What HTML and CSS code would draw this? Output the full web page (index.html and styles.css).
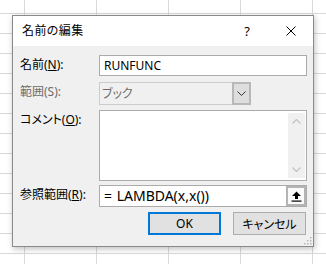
FILE: index.html
```html
<!DOCTYPE html>
<html lang="ja">
<head>
    <meta charset="UTF-8">
    <meta name="viewport" content="width=device-width, initial-scale=1.0">
    <title>名前の編集</title>
    <link rel="stylesheet" href="styles.css">
</head>
<body>
    <div class="dialog">
        <div class="titlebar">
            <span class="title">名前の編集</span>
            <span class="title-btn">?</span>
            <span class="title-btn">
                <svg width="10" height="10" viewBox="0 0 10 10">
                    <path d="M0.5 0.5 L9.5 9.5 M9.5 0.5 L0.5 9.5" stroke="#000" stroke-width="1" fill="none"/>
                </svg>
            </span>
        </div>

        <div class="content">
            <div class="row row-name">
                <label class="label">名前(<u>N</u>):</label>
                <div class="field input">RUNFUNC</div>
            </div>

            <div class="row row-scope">
                <label class="label label-disabled">範囲(S):</label>
                <div class="field combo">
                    <span class="combo-text">ブック</span>
                    <span class="combo-btn">
                        <svg width="9" height="5" viewBox="0 0 9 5">
                            <path d="M0.5 0.5 L4.5 4.5 L8.5 0.5" stroke="#333" stroke-width="1" fill="none"/>
                        </svg>
                    </span>
                </div>
            </div>

            <div class="row row-comment">
                <label class="label">コメント(<u>O</u>):</label>
                <div class="field textarea">
                    <div class="textarea-body"></div>
                    <div class="scrollbar">
                        <svg width="9" height="5" viewBox="0 0 9 5">
                            <path d="M0.5 4.5 L4.5 0.5 L8.5 4.5" stroke="#c2c2c2" stroke-width="1.2" fill="none"/>
                        </svg>
                        <svg width="9" height="5" viewBox="0 0 9 5">
                            <path d="M0.5 0.5 L4.5 4.5 L8.5 0.5" stroke="#c2c2c2" stroke-width="1.2" fill="none"/>
                        </svg>
                    </div>
                </div>
            </div>

            <div class="row row-refers">
                <label class="label">参照範囲(<u>R</u>):</label>
                <div class="field input refers">
                    <span class="refers-text">= LAMBDA(x,x())</span>
                    <span class="collapse-btn">
                        <svg width="11" height="11" viewBox="0 0 11 11">
                            <path d="M5.5 0.5 L10 5 L7 5 L7 8 L4 8 L4 5 L1 5 Z" fill="#000"/>
                            <rect x="0.5" y="9.5" width="10" height="1.2" fill="#000"/>
                        </svg>
                    </span>
                </div>
            </div>

            <div class="actions">
                <button class="btn btn-default">OK</button>
                <button class="btn">キャンセル</button>
            </div>
        </div>

        <svg class="grip" width="10" height="10" viewBox="0 0 10 10">
            <rect x="8" y="2" width="1.5" height="1.5" fill="#b8b8b8"/>
            <rect x="5" y="5" width="1.5" height="1.5" fill="#b8b8b8"/>
            <rect x="8" y="5" width="1.5" height="1.5" fill="#b8b8b8"/>
            <rect x="2" y="8" width="1.5" height="1.5" fill="#b8b8b8"/>
            <rect x="5" y="8" width="1.5" height="1.5" fill="#b8b8b8"/>
            <rect x="8" y="8" width="1.5" height="1.5" fill="#b8b8b8"/>
        </svg>
    </div>
</body>
</html>
```

FILE: styles.css
```css
* {
    margin: 0;
    padding: 0;
    box-sizing: border-box;
}

body {
    width: 326px;
    height: 264px;
    overflow: hidden;
    background-color: #fff;
    background-image:
        linear-gradient(90deg, #d9d9d9 1px, transparent 1px),
        linear-gradient(180deg, #d9d9d9 1px, transparent 1px);
    background-size: 72px 20px, 72px 20px;
    background-position: 24px 0, 0 13px;
    font-family: "Noto Sans", "Noto Sans CJK JP", sans-serif;
    font-size: 12px;
    font-feature-settings: "palt";
    color: #000;
}

.dialog {
    position: relative;
    margin: 15px 0 0 12px;
    width: 302px;
    height: 232px;
    border: 1px solid #8a8a8a;
    background: #f0f0f0;
    box-shadow: 1px 2px 6px rgba(0, 0, 0, 0.25);
}

.titlebar {
    display: flex;
    align-items: center;
    height: 30px;
    padding-left: 9px;
    background: #fff;
}

.title {
    flex: 1;
    font-size: 12px;
    line-height: 16px;
    letter-spacing: 0.4px;
}

.title-btn {
    display: flex;
    align-items: center;
    justify-content: center;
    width: 44px;
    height: 30px;
    font-size: 13px;
}

.content {
    padding: 9px 6px 0 7px;
}

.row {
    display: flex;
    align-items: flex-start;
}

.row-scope {
    margin-top: 6px;
}

.row-comment {
    margin-top: 5px;
}

.row-refers {
    margin-top: 4px;
}

.label {
    width: 79px;
    line-height: 16px;
    padding-top: 2px;
    white-space: nowrap;
}

.label u {
    text-underline-offset: 1px;
}

.label-disabled {
    color: #6d6d6d;
}

.field {
    flex: 1;
}

.input {
    height: 21px;
    padding-left: 4px;
    line-height: 19px;
    background: #fff;
    border: 1px solid #ababab;
}

.combo {
    display: flex;
    flex: none;
    width: 152px;
    height: 23px;
    background: #f0f0f0;
    border: 1px solid #cccccc;
    color: #6d6d6d;
}

.combo-text {
    flex: 1;
    padding-left: 2px;
    line-height: 21px;
}

.combo-btn {
    display: flex;
    align-items: center;
    justify-content: center;
    width: 19px;
    margin: -1px -1px -1px 0;
    border: 2px solid #b8b8b8;
    background: #dedede;
}

.textarea {
    display: flex;
    height: 71px;
    padding: 2px 1px 2px 0;
    background: #fff;
    border: 1px solid #ababab;
}

.textarea-body {
    flex: 1;
}

.scrollbar {
    display: flex;
    flex-direction: column;
    justify-content: space-between;
    align-items: center;
    width: 17px;
    padding: 6px 0 6px;
    background: #f0f0f0;
}

.refers {
    display: flex;
    height: 22px;
    padding-right: 0;
}

.refers-text {
    flex: 1;
    font-size: 14px;
    word-spacing: 1px;
    line-height: 20px;
}

.collapse-btn {
    display: flex;
    align-items: center;
    justify-content: center;
    width: 20px;
    height: 20px;
    border: 2px solid #b4b4b4;
    background: #fafafa;
}

.actions {
    display: flex;
    justify-content: flex-end;
    gap: 12px;
    margin-top: 5px;
    padding-right: 1px;
}

.btn {
    width: 73px;
    height: 23px;
    font-family: "Noto Sans", "Noto Sans CJK JP", sans-serif;
    font-size: 12px;
    font-feature-settings: "palt";
    color: #000;
    background: #e1e1e1;
    border: 1px solid #adadad;
}

.btn-default {
    border: 2px solid #0078d7;
}

.grip {
    position: absolute;
    right: 1px;
    bottom: 1px;
}
```
